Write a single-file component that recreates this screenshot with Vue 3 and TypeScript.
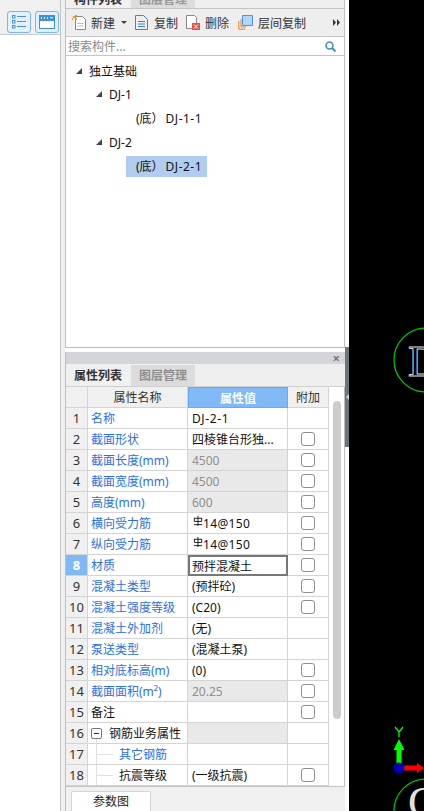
<script setup lang="ts">
interface Row {
  no: number
  name: string
  value?: string
  tone?: 'blue' | 'black'
  muted?: boolean
  check?: boolean
  steel?: boolean
  depth?: number
  group?: boolean
  active?: boolean
}

const rows: Row[] = [
  { no: 1, name: '名称', value: 'DJ-2-1' },
  { no: 2, name: '截面形状', value: '四棱锥台形独...', check: true },
  { no: 3, name: '截面长度(mm)', value: '4500', muted: true, check: true },
  { no: 4, name: '截面宽度(mm)', value: '4500', muted: true, check: true },
  { no: 5, name: '高度(mm)', value: '600', muted: true, check: true },
  { no: 6, name: '横向受力筋', value: '14@150', steel: true, check: true },
  { no: 7, name: '纵向受力筋', value: '14@150', steel: true, check: true },
  { no: 8, name: '材质', value: '预拌混凝土', active: true, check: true },
  { no: 9, name: '混凝土类型', value: '(预拌砼)', check: true },
  { no: 10, name: '混凝土强度等级', value: '(C20)', check: true },
  { no: 11, name: '混凝土外加剂', value: '(无)' },
  { no: 12, name: '泵送类型', value: '(混凝土泵)' },
  { no: 13, name: '相对底标高(m)', value: '(0)', check: true },
  { no: 14, name: '截面面积(m²)', value: '20.25', muted: true, check: true },
  { no: 15, name: '备注', tone: 'black', check: true },
  { no: 16, name: '钢筋业务属性', tone: 'black', group: true, muted: true },
  { no: 17, name: '其它钢筋', depth: 1 },
  { no: 18, name: '抗震等级', tone: 'black', depth: 1, value: '(一级抗震)', check: true },
]
</script>

<template>
  <div class="screen">
    <aside class="rail">
      <div class="rail-bar">
        <button class="rail-btn" type="button" aria-label="列表">
          <svg width="16" height="14" viewBox="0 0 16 14" fill="none" stroke="#4a90d9">
            <rect x="1.5" y="0.5" width="2.5" height="2.5" /><rect x="1.5" y="5.5" width="2.5" height="2.5" /><rect x="1.5" y="10.5" width="2.5" height="2.5" />
            <path d="M6 1.5h9M6 6.5h9M6 11.5h9" />
          </svg>
        </button>
        <button class="rail-btn" type="button" aria-label="窗口">
          <svg width="16" height="14" viewBox="0 0 16 14">
            <path d="M0 0h16v14H0z" fill="#3f8fe0" />
            <path d="M2 2h1v2H2zM5 2h1v2H5zM8 2h1v2H8zM11 2h3l-1.500 2z" fill="#fff" />
            <path d="M1 6h14v7H1z" fill="#fff" />
          </svg>
        </button>
      </div>
    </aside>
    <div class="gutter"></div>

    <main class="dock">
      <section class="top-panel">
        <div class="top-tabs">
          <span class="tab tab-on">构件列表</span>
          <span class="tab tab-off">图层管理</span>
        </div>
        <div class="toolbar">
          <span class="tool tool-new">
            <svg width="15" height="15" viewBox="0 0 15 15">
              <path d="M3.500 1.500h7l3 3v10h-10z" fill="#fff" stroke="#888" />
              <path d="M1 1h2v2H1zM3 3h2v2H3zM3 0h2v1H3zM0 3h1v2H0z" fill="#f39a1f" />
              <path d="M5.500 8.500h6M5.500 11h6" stroke="#bbb" />
            </svg>
            <span>新建</span><i class="caret"></i>
          </span>
          <span class="tool tool-copy">
            <svg width="13" height="15" viewBox="0 0 13 15" fill="none" stroke="#3e86c9">
              <path d="M.5.500h8l4 4v10H.5z" />
              <path d="M3 6.500h7M3 9h7M3 11.500h7" />
            </svg>
            <span>复制</span>
          </span>
          <span class="tool tool-del">
            <svg width="14" height="15" viewBox="0 0 14 15">
              <path d="M.5.500h8l2 2v11H.5z" fill="#fff" stroke="#888" />
              <path d="M6 8h8v7H6z" fill="#e2554f" />
              <path d="M8 9.500l4 4M12 9.500l-4 4" stroke="#fff" />
            </svg>
            <span>删除</span>
          </span>
          <span class="tool tool-layer">
            <svg width="15" height="15" viewBox="0 0 15 15" fill="none">
              <path d="M.8 6v8.200h6.500M3 4v8h5" stroke="#ef7f22" />
              <path d="M4.500.500h10v10h-10z" fill="#b5d6f8" stroke="#4f94dc" />
            </svg>
            <span>层间复制</span>
          </span>
          <svg class="more" width="7" height="7" viewBox="0 0 7 7" fill="#333">
            <path d="M0 0l3 3.500L0 7zM4 0l3 3.500L4 7z" />
          </svg>
        </div>
        <div class="search">
          <span>搜索构件...</span>
          <svg width="11" height="11" viewBox="0 0 11 11" fill="none" stroke="#3f8fc0">
            <circle cx="4.500" cy="4.500" r="3.500" stroke-width="1.500" />
            <path d="M7 7l3.500 3.500" stroke-width="2" />
          </svg>
        </div>
        <div class="tree">
          <div class="node node-0"><i class="twist"></i>独立基础</div>
          <div class="node node-1"><i class="twist"></i>DJ-1</div>
          <div class="node node-2"><span class="leaf">(底）<span class="code">DJ-1-1</span></span></div>
          <div class="node node-1"><i class="twist"></i>DJ-2</div>
          <div class="node node-2"><span class="leaf leaf-on">(底）<span class="code">DJ-2-1</span></span></div>
        </div>
      </section>

      <section class="prop-panel">
        <header class="titlebar"><span class="close">×</span></header>
        <div class="prop-tabs">
          <span class="ptab ptab-on">属性列表</span>
          <span class="ptab ptab-off">图层管理</span>
        </div>
        <div class="grid-wrap">
          <div class="grid">
            <div class="row head">
              <div class="c no"></div>
              <div class="c name">属性名称</div>
              <div class="c val">属性值</div>
              <div class="c add">附加</div>
            </div>
            <div v-for="r in rows" :key="r.no" class="row" :class="{ 'row-active': r.active }">
              <div class="c no">{{ r.no }}</div>
              <div class="c name" :class="[r.tone === 'black' ? 'black' : 'blue', r.depth ? 'child' : '', r.group ? 'group' : '']">
                <i v-if="r.group" class="minus"></i>
                <i v-if="r.depth" class="branch"></i>
                <i v-if="r.group || r.depth" class="stem" :class="{ 'stem-start': r.group }"></i>
                {{ r.name }}
              </div>
              <div class="c val" :class="{ muted: r.muted }">
                <svg v-if="r.steel" class="steel" width="10" height="10" viewBox="0 0 11 11" fill="none" stroke="#111">
                  <path d="M5.500 0v11M1.500 2.500v3.500h8V2.500M1 2.500h9M1 9.500h9" />
                </svg>
                <span :class="{ spaced: r.no === 1, 'spaced-steel': r.steel }">{{ r.value }}</span>
              </div>
              <div class="c add"><i v-if="r.check" class="check"></i></div>
            </div>
          </div>
          <div class="scroll"><i class="thumb"></i></div>
        </div>
        <footer class="foot"><span class="foot-tab">参数图</span></footer>
      </section>
    </main>

    <div class="splitter">
      <i class="handle"><b></b></i>
    </div>

    <section class="canvas">
      <svg class="drawing" width="75" height="811" viewBox="349 0 75 811" fill="none">
        <circle cx="426" cy="360" r="32" stroke="#0c0" stroke-width="1.200" />
        <circle cx="426" cy="811" r="32" stroke="#0c0" stroke-width="1.200" />
        <path d="M395 727l4 5 4-5M399 732v5" stroke="#0f0" stroke-width="1.300" />
        <path d="M399 739l5.500 11h-3v15h-5v-15h-3z" fill="#0f0" />
        <path d="M403 765.500h14v5h-14z" fill="#f00" />
        <path d="M417 763l7 5-7 5z" fill="#f00" />
        <circle cx="399" cy="768" r="5.500" fill="#0000b0" />
      </svg>
      <span class="mark mark-top">D</span>
      <span class="mark mark-bottom">C</span>
    </section>
  </div>
</template>

<style scoped>
.screen {
  display: flex;
  width: 424px;
  height: 811px;
  overflow: hidden;
  background: #fff;
  font-family: "Noto Sans", "Noto Sans CJK SC", sans-serif;
  font-size: 12px;
  color: #111;
}
.rail {
  width: 60px;
  flex: none;
  border-right: 1px solid #c4c4c4;
}
.rail-bar {
  height: 35px;
  box-sizing: border-box;
  padding: 11px 0 0 7px;
  background: #f0f0f0;
  border-bottom: 1px solid #c8c8c8;
  display: flex;
  gap: 4px;
}
.rail-btn {
  width: 24px;
  height: 22px;
  padding: 0;
  background: #e3f0fd;
  border: 1px solid #79b5f2;
  border-radius: 3px;
  display: flex;
  align-items: center;
  justify-content: center;
}
.gutter {
  width: 4px;
  flex: none;
  background: #f0f0f0;
}
.dock {
  width: 280px;
  flex: none;
  display: flex;
  flex-direction: column;
}
.top-panel {
  height: 348px;
  box-sizing: border-box;
  flex: none;
  display: flex;
  flex-direction: column;
  border: 1px solid #bdbdbd;
  border-top: 0;
}
.top-tabs {
  height: 9px;
  flex: none;
  box-sizing: border-box;
  overflow: hidden;
  display: flex;
  align-items: flex-end;
  border-bottom: 1px solid #c4c4c4;
  background: #efefef;
  gap: 1px;
}
.tab {
  width: 64px;
  height: 16px;
  flex: none;
  text-align: center;
  line-height: 16px;
  font-weight: 700;
  color: #333;
}
.tab-on { background: #f0f0f0; }
.tab-off { background: #dcdcdc; color: #999; }
.toolbar {
  height: 28px;
  flex: none;
  box-sizing: border-box;
  display: flex;
  align-items: center;
  padding-left: 6px;
  background: #eeeeee;
  border-bottom: 1px solid #c4c4c4;
  color: #333;
}
.tool {
  display: inline-flex;
  align-items: center;
  flex: none;
}
.tool-new { width: 63px; gap: 4px; }
.tool-copy { width: 51px; gap: 6px; }
.tool-del { width: 52px; gap: 5px; }
.tool-layer { width: 95px; gap: 5px; }
.caret {
  width: 0;
  height: 0;
  margin-left: 2px;
  border: 3px solid transparent;
  border-top: 3px solid #444;
  border-bottom: 0;
}
.more { flex: none; }
.search {
  height: 19px;
  flex: none;
  box-sizing: border-box;
  display: flex;
  align-items: center;
  justify-content: space-between;
  padding: 0 8px 0 2px;
  background: #fff;
  border-bottom: 1px solid #c4c4c4;
  color: #8a8a8a;
}
.tree {
  flex: 1;
  padding-top: 4px;
  background: #fff;
}
.node {
  height: 24px;
  display: flex;
  align-items: center;
}
.node-0 { padding-left: 10px; height: 22px; }
.node-1 { padding-left: 30px; }
.node-2 { padding-left: 60px; }
.twist {
  width: 0;
  height: 0;
  margin-right: 7px;
  border-style: solid;
  border-width: 0 0 6px 6px;
  border-color: transparent transparent #444 transparent;
}
.leaf {
  display: block;
  box-sizing: border-box;
  width: 81px;
  height: 21px;
  padding-left: 10px;
  line-height: 21px;
  white-space: nowrap;
}
.code { margin-left: 2px; letter-spacing: 0.5px; }
.spaced { letter-spacing: 0.6px; }
.spaced-steel { letter-spacing: 0.35px; }
.leaf-on { background: #b0ccee; }
.prop-panel {
  margin-top: 4px;
  flex: 1;
  min-height: 0;
  display: flex;
  flex-direction: column;
  border-left: 1px solid #bdbdbd;
  background: #f0f0f0;
}
.titlebar {
  height: 12px;
  flex: none;
  display: flex;
  justify-content: flex-end;
  align-items: center;
  padding-right: 5px;
  background: #d4d5da;
}
.close {
  color: #777;
  font-size: 13px;
  font-weight: 700;
  line-height: 12px;
}
.prop-tabs {
  height: 23px;
  flex: none;
  box-sizing: border-box;
  display: flex;
  align-items: stretch;
  gap: 1px;
  padding-top: 1px;
  background: #efefef;
  border-bottom: 1px solid #d0d0d0;
}
.ptab {
  width: 64px;
  text-align: center;
  line-height: 21px;
  font-weight: 700;
}
.ptab-on { background: #f0f0f0; color: #333; }
.ptab-off { background: #dcdcdc; color: #8f8f8f; }
.grid-wrap {
  height: 400px;
  flex: none;
  box-sizing: border-box;
  display: flex;
  overflow: hidden;
  background: #fff;
  border-right: 1px solid #bdbdbd;
  border-bottom: 1px solid #c4c4c4;
}
.grid { width: 263px; flex: none; }
.row {
  display: grid;
  grid-template-columns: 22px 100px 100px 41px;
  height: 21px;
}
.head { height: 21px; }
.c {
  box-sizing: border-box;
  border-right: 1px solid #d4d4d4;
  border-bottom: 1px solid #d4d4d4;
  display: flex;
  align-items: center;
  white-space: nowrap;
  overflow: hidden;
  position: relative;
}
.no {
  justify-content: center;
  background: #f0f0f0;
  color: #333;
  font-size: 13px;
}
.name { padding-left: 3px; }
.val { padding-left: 4px; color: #111; }
.add { justify-content: center; }
.blue { color: #2b6fe8; }
.black { color: #111; }
.head .c { background: #f0f0f0; justify-content: center; padding: 0; color: #333; }
.head .val { background: #80b8f8; color: #fff; border: 1px solid #6ba8ee; font-weight: 700; }
.muted { background: #e9e9e9; color: #8f8f8f; }
.row-active .no { background: #80b8f8; color: #fff; font-weight: 700; }
.row-active .val { border: 2px solid #777; padding-left: 2px; }
.steel { margin-left: 1px; transform: translateY(-2px); }
.child { padding-left: 31px; }
.group { padding-left: 21px; }
.minus {
  position: absolute;
  left: 3px;
  top: 5px;
  width: 11px;
  height: 11px;
  box-sizing: border-box;
  border: 1px solid #777;
  border-radius: 2px;
}
.minus::after {
  content: "";
  position: absolute;
  left: 2px;
  top: 4px;
  width: 5px;
  height: 1px;
  background: #333;
}
.stem {
  position: absolute;
  left: 8px;
  top: 0;
  bottom: -1px;
  border-left: 1px solid #e0e0e0;
}
.stem-start { top: 16px; }
.branch {
  position: absolute;
  left: 9px;
  top: 10px;
  width: 16px;
  border-top: 1px solid #e0e0e0;
}
.check {
  width: 14px;
  height: 14px;
  box-sizing: border-box;
  background: #fff;
  border: 1px solid #8f8f8f;
  border-radius: 3px;
}
.scroll {
  flex: 1;
  padding: 14px 0 0 4px;
  background: #fff;
}
.thumb {
  display: block;
  width: 8px;
  height: 318px;
  border-radius: 4px;
  background: #cccccc;
}
.foot {
  flex: 1;
  padding: 4px 0 0 5px;
  background: #f0f0f0;
}
.foot-tab {
  display: block;
  box-sizing: border-box;
  width: 80px;
  height: 24px;
  text-align: center;
  line-height: 20px;
  background: #fff;
  border: 1px solid #d4d4d4;
  border-radius: 2px 2px 0 0;
  color: #222;
}
.splitter {
  width: 4px;
  flex: none;
  background: #fff;
  padding-top: 347px;
}
.handle {
  display: flex;
  align-items: center;
  justify-content: center;
  height: 100px;
  background: #6b7580;
}
.handle b {
  width: 0;
  height: 0;
  border-style: solid;
  border-width: 3px 3px 3px 0;
  border-color: transparent #d0d4d8 transparent transparent;
}
.canvas {
  flex: 1;
  position: relative;
  overflow: hidden;
  background: #000;
}
.drawing {
  position: absolute;
  left: 0;
  top: 0;
}
.mark {
  position: absolute;
  left: 59px;
  font-family: "Liberation Serif", serif;
  font-size: 44px;
  line-height: 1;
  color: #000;
  -webkit-text-stroke: 1px #d8d8d8;
}
.mark-top { top: 340px; }
.mark-bottom {
  top: 781px;
  color: #e0e0e0;
  -webkit-text-stroke: 0;
}
</style>
